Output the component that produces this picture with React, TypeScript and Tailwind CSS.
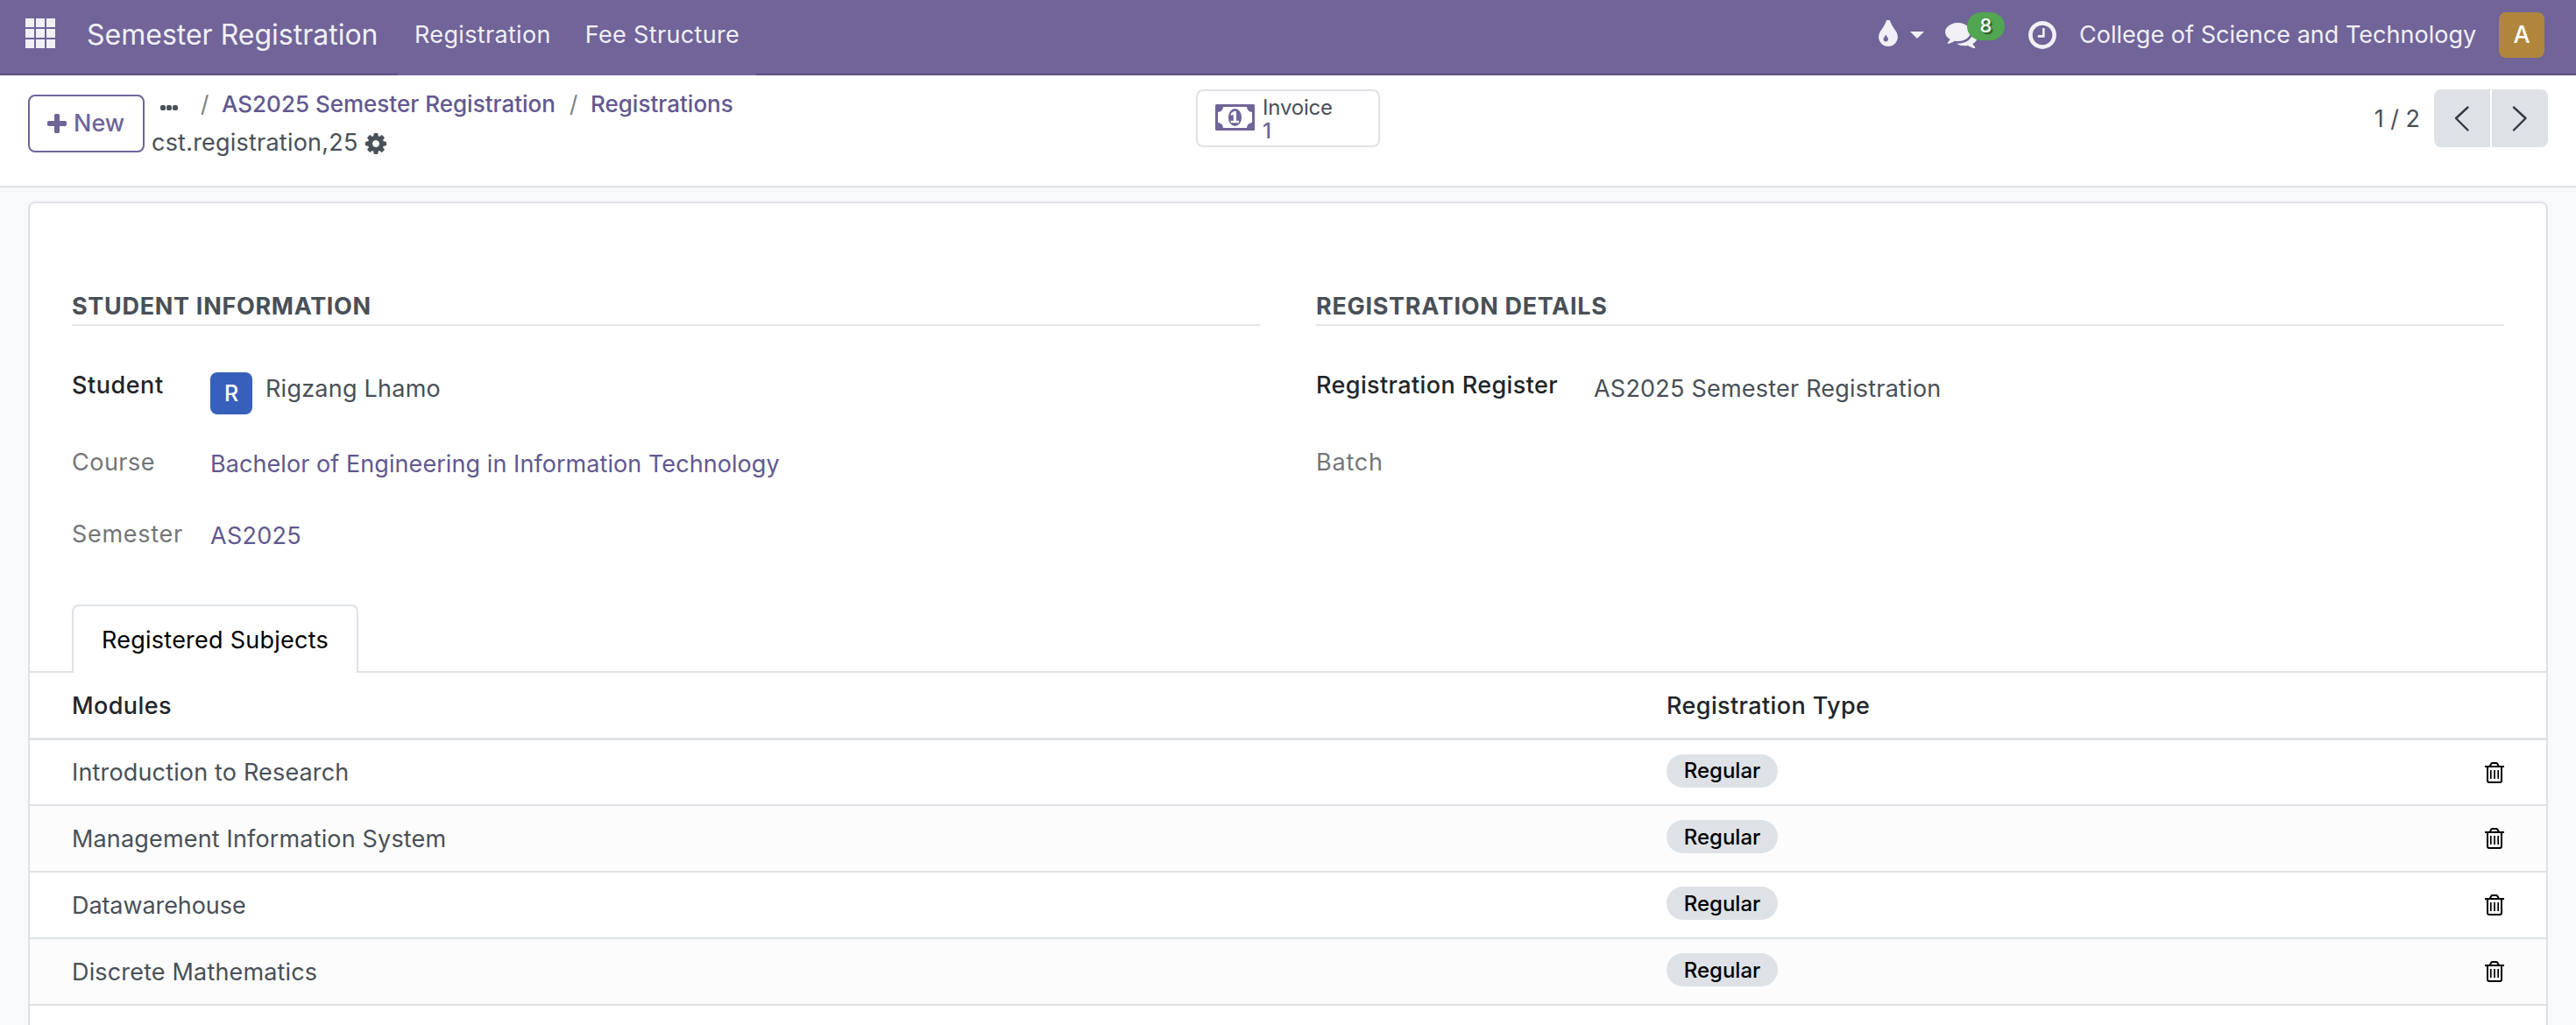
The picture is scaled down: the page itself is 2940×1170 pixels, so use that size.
import type { ReactNode } from 'react';

type IconProps = { d: string; className: string; viewBox?: string };

function Icon({ d, className, viewBox = '0 0 1792 1792' }: IconProps) {
  return (
    <svg viewBox={viewBox} className={className} fill="currentColor" aria-hidden="true">
      <path d={d} />
    </svg>
  );
}

const PLUS =
  'M1600 736v192q0 40-28 68t-68 28h-416v416q0 40-28 68t-68 28h-192q-40 0-68-28t-28-68v-416h-416q-40 0-68-28t-28-68v-192q0-40 28-68t68-28h416v-416q0-40 28-68t68-28h192q40 0 68 28t28 68v416h416q40 0 68 28t28 68z';
const COG =
  'M1152 896q0-106-75-181t-181-75-181 75-75 181 75 181 181 75 181-75 75-181zm512-109v222q0 12-8 23t-20 13l-185 28q-19 54-39 91 35 50 107 138 10 12 10 25t-9 23q-27 37-99 108t-94 71q-12 0-26-9l-138-108q-44 23-91 38-16 136-29 186-7 28-36 28h-222q-14 0-24.500-8.500t-11.500-21.500l-28-184q-49-16-90-37l-141 107q-10 9-25 9-14 0-25-11-126-114-165-168-7-10-7-23 0-12 8-23 15-21 51-66.500t54-70.500q-27-50-41-99l-183-27q-13-2-21-12.500t-8-23.500v-222q0-12 8-23t19-13l186-28q14-46 39-92-40-57-107-138-10-12-10-24 0-10 9-23 26-36 98.500-107.500t94.500-71.500q13 0 26 10l138 107q44-23 91-38 16-136 29-186 7-28 36-28h222q14 0 24.500 8.500t11.500 21.500l28 184q49 16 90 37l142-107q9-9 24-9 13 0 25 10 129 119 165 170 7 8 7 22 0 12-8 23-15 21-51 66.500t-54 70.500q26 50 41 98l183 28q13 2 21 12.500t8 23.500z';
const CLOCK =
  'M1024 544v448q0 14-9 23t-23 9h-320q-14 0-23-9t-9-23v-64q0-14 9-23t23-9h224v-352q0-14 9-23t23-9h64q14 0 23 9t9 23zm416 352q0-148-73-273t-198-198-273-73-273 73-198 198-73 273 73 273 198 198 273 73 273-73 198-198 73-273zm224 0q0 209-103 385.500t-279.500 279.500-385.500 103-385.500-103-279.500-279.500-103-385.500 103-385.500 279.500-279.500 385.500-103 385.500 103 279.500 279.500 103 385.500z';
const COMMENTS =
  'M1408 768q0 139-94 257t-256.500 186.500-353.500 68.500q-86 0-176-16-124 88-278 128-36 9-86 16h-3q-11 0-20.500-8t-11.500-21q-1-3-1-6.500t.5-6.500 2-6l2.500-5 3.500-5.500 4-5 4.500-5 4-4.500q5-6 23-25t26-29.500 22.500-29 25-38.500 20.500-44q-124-72-195-177t-71-224q0-139 94-257t256.500-186.500 353.500-68.500 353.500 68.500 256.500 186.500 94 257zm384 256q0 120-71 224.500t-195 176.500q10 24 20.500 44t25 38.500 22.500 29 26 29.500 23 25q1 1 4 4.500t4.500 5 4 5 3.500 5.500l2.500 5 2 6 .5 6.500-1 6.500q-3 14-13 22t-22 7q-50-7-86-16-154-40-278-128-90 16-176 16-271 0-472-132 58 4 88 4 161 0 309-45t264-129q125-92 192-212t67-254q0-77-23-152 129 71 204 178t75 230z';
const TINT =
  'M896 1152q0-36-20-69-1-1-15.500-22.500t-25.500-38-25-44-21-50.500q-4-16-21-16t-21 16q-7 23-21 50.500t-25 44-25.500 38-15.500 22.500q-20 33-20 69 0 53 37.500 90.500t90.500 37.500 90.500-37.500 37.500-90.500zm512-128q0 212-150 362t-362 150-362-150-150-362q0-145 81-275 6-9 62.500-90.500t101-151 99.500-178 83-201.500q9-30 34-47t51-17 51.500 17 33.500 47q28 93 83 201.500t99.500 178 101 151 62.500 90.500q81 127 81 275z';

function AppsIcon() {
  return (
    <div className="grid w-[34px] grid-cols-3 gap-x-[2px] gap-y-[2px]">
      {Array.from({ length: 9 }, (_, i) => (
        <span key={i} className="h-[10px] bg-[#f1f0f5]" />
      ))}
    </div>
  );
}

function MoneyIcon() {
  return (
    <svg viewBox="0 0 45 30" className="h-[30px] w-[45px] shrink-0" aria-hidden="true">
      <rect width="45" height="30" rx="1.5" fill="#706499" />
      <path d="M9 3H36A6 6 0 0 0 42 9V21A6 6 0 0 0 36 27H9A6 6 0 0 0 3 21V9A6 6 0 0 0 9 3Z" fill="#fff" />
      <ellipse cx="22.500" cy="15" rx="7.600" ry="10" fill="#706499" />
      <path d="M21 8H24V18.800H27V21.300H17.800V18.800H20.800V11.800L18.500 13L17.500 11Z" fill="#fff" />
    </svg>
  );
}

function TrashIcon() {
  return (
    <svg viewBox="0 0 22 24" className="h-6 w-[22px]" fill="none" stroke="#000" aria-hidden="true">
      <path d="M0 5H22" strokeWidth="2" />
      <path d="M5.500 5L7.300 1.800Q7.700 1 8.600 1H12.900Q13.800 1 14.300 1.800L16 5" strokeWidth="2" />
      <path d="M3 5V21Q3 23 5 23H17Q19 23 19 21V5" strokeWidth="2" />
      <path d="M6.800 9V19M11 9V19M15.200 9V19" strokeWidth="1.700" />
    </svg>
  );
}

function Header() {
  return (
    <header className="flex h-[86px] items-stretch bg-[#706499] text-[#f1f0f5] shadow-[inset_0_-2px_0_#5a4f7b]">
      <div className="flex items-center pb-[10px] pl-[29px]">
        <AppsIcon />
      </div>
      <div className="flex w-[391px] items-center whitespace-nowrap pb-[6px] pl-[36px] text-[32px]">
        Semester Registration
      </div>
      <nav className="flex w-[409px] items-center gap-[39px] bg-[#706499] pb-[5px] pl-[19px] tracking-[0.0125em]">
        <span>Registration</span>
        <span>Fee Structure</span>
      </nav>
      <div className="ml-auto flex items-center pb-[6px] pr-9">
        <Icon d={TINT} viewBox="384 128 1024 1408" className="mb-1 h-[30px] w-[22px]" />
        <svg viewBox="0 0 16 8" className="ml-[14px] h-2 w-4" fill="currentColor">
          <path d="M0 0H16L8 8Z" />
        </svg>
        <div className="relative ml-6 w-9">
          <Icon d={COMMENTS} viewBox="0 256 1792 1408" className="h-[29px] w-[37px]" />
          <span className="absolute -top-[12px] left-[25px] flex h-8 w-[43px] items-center justify-center rounded-full bg-[#52a551] text-[22px] font-medium text-white [text-shadow:2px_2px_1px_rgba(0,0,0,0.45)]">
            8
          </span>
        </div>
        <Icon d={CLOCK} viewBox="128 128 1536 1536" className="ml-[59px] h-8 w-8" />
        <span className="ml-[26px] w-[455px] whitespace-nowrap pt-px tracking-[0.001em]">College of Science and Technology</span>
        <span className="ml-6 flex size-[52px] items-center justify-center rounded-lg bg-[#b0863d] text-[27px] font-medium text-white">
          A
        </span>
      </div>
    </header>
  );
}

function ControlPanel() {
  return (
    <section className="grid h-32 grid-cols-[1365px_210px_1fr] border-b-2 border-[#dee2e6] bg-white">
      <div className="flex pl-8">
        <button className="mt-[22px] flex h-[66px] w-[133px] shrink-0 items-center rounded-lg border-2 border-[#706499] pl-5 font-medium text-[#706499]">
          <Icon d={PLUS} viewBox="192 128 1408 1408" className="mr-2 size-[22px]" />
          <span className="pt-px">New</span>
        </button>
        <div className="flex flex-col pl-2 pt-3">
          <div className="flex h-[41px] items-center whitespace-nowrap text-[26px] font-medium text-[#625890]">
            <span className="ml-[10px] mt-2 flex gap-px">
              <i className="size-[6px] rounded-[2px] bg-[#495057]" />
              <i className="size-[6px] rounded-[2px] bg-[#495057]" />
              <i className="size-[6px] rounded-[2px] bg-[#495057]" />
            </span>
            <span className="ml-[26px] w-6 font-normal text-[#7b8086]">/</span>
            <span className="w-[397px]">AS2025 Semester Registration</span>
            <span className="w-6 font-normal text-[#7b8086]">/</span>
            <span>Registrations</span>
          </div>
          <div className="flex h-12 items-center pt-px tracking-[0.008em] text-[#495057]">
            cst.registration,25
            <Icon d={COG} viewBox="128 128 1536 1536" className="ml-2 size-6" />
          </div>
        </div>
      </div>
      <button className="mt-4 flex h-[66px] items-center gap-[9px] rounded-lg border-2 border-[#dee2e6] pb-[2px] pl-5 text-left">
        <MoneyIcon />
        <span className="flex flex-col pt-1 text-2xl leading-[27px]">
          <span className="tracking-[-0.008em] text-[#495057]">Invoice</span>
          <span className="font-medium text-[#706499]">1</span>
        </span>
      </button>
      <div className="flex items-start justify-end pr-8 pt-4">
        <span className="mr-4 leading-[67px] text-[#495057]">1 / 2</span>
        <div className="flex gap-[2px]">
          <button className="flex h-[66px] w-16 items-center justify-center rounded-l-lg bg-[#dee2e6]">
            <Chevron d="M15.500 1.500L2 14L15.500 27.500" />
          </button>
          <button className="flex h-[66px] w-16 items-center justify-center rounded-r-lg bg-[#dee2e6]">
            <Chevron d="M2 1.500L15.500 14L2 27.500" />
          </button>
        </div>
      </div>
    </section>
  );
}

function Chevron({ d }: { d: string }) {
  return (
    <svg viewBox="0 0 18 29" className="h-[29px] w-[18px]" fill="none" stroke="#343a40" strokeWidth="2.400" strokeLinecap="round" strokeLinejoin="round">
      <path d={d} />
    </svg>
  );
}

function GroupTitle({ children }: { children: ReactNode }) {
  return (
    <h2 className="h-11 border-b-2 border-[#e4e5e6] font-bold leading-[44px] tracking-[0.0255em] text-[#495057]">
      {children}
    </h2>
  );
}

function StudentGroup() {
  return (
    <div className="w-[1356px]">
      <GroupTitle>STUDENT INFORMATION</GroupTitle>
      <dl className="mt-11 grid grid-cols-[158px_1fr] grid-rows-[88px_82px_104px]">
        <dt className="font-medium leading-[48px] tracking-[0.02em] text-[#212529]">Student</dt>
        <dd className="flex items-start gap-[15px] pt-[9px]">
          <span className="flex size-12 items-center justify-center rounded-lg bg-[#3660ba] pt-px text-[25px] font-medium text-white">
            R
          </span>
          <span className="leading-[38px] tracking-[0.009em] text-[#495057]">Rigzang Lhamo</span>
        </dd>
        <dt className="leading-[48px] tracking-[0.018em] text-[#737578]">Course</dt>
        <dd className="pt-[9px] leading-[34px] tracking-[0.0025em] text-[#625890]">
          Bachelor of Engineering in Information Technology
        </dd>
        <dt className="leading-[48px] tracking-[0.026em] text-[#737578]">Semester</dt>
        <dd className="pt-[9px] leading-[34px] tracking-[0.01em] text-[#625890]">AS2025</dd>
      </dl>
    </div>
  );
}

function RegistrationGroup() {
  return (
    <div className="w-[1356px]">
      <GroupTitle>REGISTRATION DETAILS</GroupTitle>
      <dl className="mt-11 grid grid-cols-[316px_1fr] grid-rows-[88px_82px]">
        <dt className="font-medium leading-[48px] tracking-[0.0145em] text-[#212529]">Registration Register</dt>
        <dd className="pt-[9px] pl-px leading-[38px] tracking-[0.008em] text-[#495057]">AS2025 Semester Registration</dd>
        <dt className="leading-[48px] tracking-[0.03em] text-[#737578]">Batch</dt>
        <dd />
      </dl>
    </div>
  );
}

const modules = [
  'Introduction to Research',
  'Management Information System',
  'Datawarehouse',
  'Discrete Mathematics',
];

function SubjectsTable() {
  return (
    <div>
      <div className="flex h-[78px] border-b-2 border-[#dee2e6] pl-12">
        <div className="h-[78px] w-[327px] rounded-t-lg border-2 border-b-0 border-[#dee2e6] bg-white text-center leading-[77px] tracking-[0.009em] text-black">
          Registered Subjects
        </div>
      </div>
      <div className="flex h-[77px] items-center border-b-[3px] border-[#dee2e6] pl-12 pt-[2px] font-medium tracking-[0.0145em] text-[#212529]">
        <span className="w-[1820px]">Modules</span>
        <span>Registration Type</span>
      </div>
      {modules.map((name, i) => (
        <div
          key={name}
          className={`flex items-center border-b-2 border-[#dee2e6] px-12 ${i === 0 ? 'h-[75px]' : 'h-[76px]'} ${i % 2 ? 'bg-[#fcfcfc]' : 'bg-white'}`}
        >
          <span className={`w-[1820px] pt-[2px] text-[#495057] ${i === 2 ? 'tracking-[-0.003em]' : 'tracking-[0.006em]'}`}>
            {name}
          </span>
          <span className="mb-1 flex h-[38px] w-[127px] items-center justify-center rounded-full bg-[#dee2e6] pt-px text-2xl font-medium text-black">
            Regular
          </span>
          <span className="ml-auto">
            <TrashIcon />
          </span>
        </div>
      ))}
    </div>
  );
}

export default function App() {
  return (
    <div className="h-[1170px] w-[2940px] overflow-hidden bg-[#f8f9fa] font-['Inter',sans-serif] text-[27px] leading-normal">
      <Header />
      <ControlPanel />
      <main className="mx-8 mt-4 h-[960px] rounded-t-lg border-2 border-[#dee2e6] bg-white">
        <div className="flex gap-16 px-12 pt-24">
          <StudentGroup />
          <RegistrationGroup />
        </div>
        <SubjectsTable />
      </main>
    </div>
  );
}
